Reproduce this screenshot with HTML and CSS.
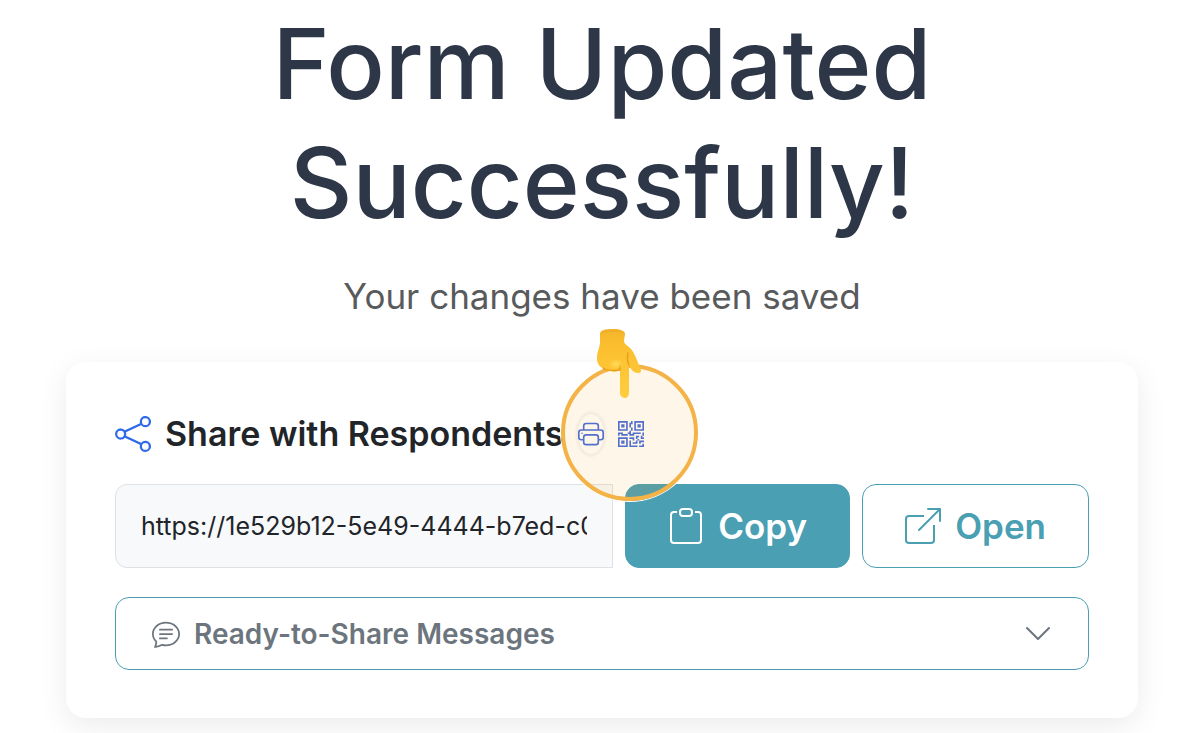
FILE: index.html
```html
<!DOCTYPE html>
<html lang="en">
<head>
    <meta charset="UTF-8">
    <meta name="viewport" content="width=device-width, initial-scale=1.0">
    <title>Form Updated</title>
    <link rel="stylesheet" href="styles.css">
</head>
<body>
    <main class="page">
        <h1>Form Updated<br>Successfully!</h1>
        <p class="subtitle">Your changes have been saved</p>

        <section class="card">
            <div class="card-header">
                <svg class="icon-share" viewBox="0 0 16 16" fill="currentColor" aria-hidden="true">
                    <path d="M13.5 1a1.5 1.5 0 1 0 0 3 1.5 1.5 0 0 0 0-3M11 2.5a2.5 2.5 0 1 1 .603 1.628l-6.718 3.12a2.5 2.5 0 0 1 0 1.504l6.718 3.12a2.5 2.5 0 1 1-.488.876l-6.718-3.12a2.5 2.5 0 1 1 0-3.256l6.718-3.12A2.5 2.5 0 0 1 11 2.5m-8.5 4a1.5 1.5 0 1 0 0 3 1.5 1.5 0 0 0 0-3m11 5.5a1.5 1.5 0 1 0 0 3 1.5 1.5 0 0 0 0-3"/>
                </svg>
                <h2>Share with Respondents</h2>
                <div class="tools">
                    <button type="button" class="tool tool-print" aria-label="Print">
                        <svg viewBox="0 0 16 16" fill="currentColor">
                            <path d="M2.5 8a.5.5 0 1 0 0-1 .5.5 0 0 0 0 1"/>
                            <path d="M5 1a2 2 0 0 0-2 2v2H2a2 2 0 0 0-2 2v3a2 2 0 0 0 2 2h1v1a2 2 0 0 0 2 2h6a2 2 0 0 0 2-2v-1h1a2 2 0 0 0 2-2V7a2 2 0 0 0-2-2h-1V3a2 2 0 0 0-2-2zM4 3a1 1 0 0 1 1-1h6a1 1 0 0 1 1 1v2H4zm1 5a2 2 0 0 0-2 2v1H2a1 1 0 0 1-1-1V7a1 1 0 0 1 1-1h12a1 1 0 0 1 1 1v3a1 1 0 0 1-1 1h-1v-1a2 2 0 0 0-2-2zm7 2v3a1 1 0 0 1-1 1H5a1 1 0 0 1-1-1v-3a1 1 0 0 1 1-1h6a1 1 0 0 1 1 1"/>
                        </svg>
                    </button>
                    <button type="button" class="tool" aria-label="QR code">
                        <svg viewBox="0 0 16 16" fill="currentColor">
                            <path d="M2 2h2v2H2z"/>
                            <path d="M6 0v6H0V0zM5 1H1v4h4zM4 12H2v2h2z"/>
                            <path d="M6 10v6H0v-6zm-5 1v4h4v-4zm11-9h2v2h-2z"/>
                            <path d="M10 0v6h6V0zm5 1v4h-4V1zM8 1V0h1v2H8v2H7V1zm0 5V4h1v2zM6 8V7h1V6h1v2h1V7h5v1h-4v1H7V8zm0 0v1H2V8H1v1H0V7h3v1zm10 1h-1V7h1zm-1 0h-1v2h2v-1h-1zm-4 0h2v1h-1v1h-1zm2 3v-1h-1v1h-1v1H9v1h3v-2zm0 0h3v1h-2v1h-1zm-4-1v1h1v-2H7v1z"/>
                            <path d="M7 12h1v3h4v1H7zm9 2v2h-3v-1h2v-1z"/>
                        </svg>
                    </button>
                    <div class="spotlight"></div>
                    <svg class="pointer" viewBox="0 0 46 70" aria-hidden="true">
                        <defs>
                            <linearGradient id="hand" x1="0" y1="0" x2="0" y2="1">
                                <stop offset="0" stop-color="#f5b52c"/>
                                <stop offset="0.3" stop-color="#fcc02f"/>
                                <stop offset="1" stop-color="#ffcd3f"/>
                            </linearGradient>
                            <radialGradient id="knuckle">
                                <stop offset="0" stop-color="#ffdc58"/>
                                <stop offset="1" stop-color="#ffdc58" stop-opacity="0"/>
                            </radialGradient>
                        </defs>
                        <path fill="url(#hand)" d="M3 5C3 1 8 0 16 0s12 2 12 5l-1 7c0 3 3 4 6 7 5 5 7 13 10 19 2 4 1 6-2 6-4 0-7-3-9-8l0 28c0 3-2 5-4 5s-5-2-5-5V41c-3 2-6 2-9 1-3 0-6 0-8-3-4-1-6-5-6-10 0-7 3-10 3-16z"/>
                        <path fill="#f0ae28" d="M3 6C4 2 10 1 16 1s11 2 12 5c-3-3-8-3-12-3S6 3 3 6z"/>
                        <path fill="none" stroke="#e5a01c" stroke-width="1.5" stroke-linecap="round" d="M31 24c-1 4-1 8 1 12M23 41v-5M6 39c4 3 10 3 16 2"/>
                        <ellipse cx="19" cy="35" rx="8" ry="5" fill="url(#knuckle)"/>
                    </svg>
                </div>
            </div>

            <div class="link-row">
                <input type="text" class="link-input" aria-label="Form link" value="https://1e529b12-5e49-4444-b7ed-c0a81f" readonly>
                <button type="button" class="btn btn-copy">
                    <svg viewBox="0 0 36 36" fill="none" stroke="currentColor" stroke-width="2" aria-hidden="true">
                        <path d="M9 4H6a3 3 0 0 0-3 3v25a3 3 0 0 0 3 3h24a3 3 0 0 0 3-3V7a3 3 0 0 0-3-3h-3"/>
                        <rect x="12" y="1" width="12" height="7" rx="3"/>
                    </svg>
                    Copy
                </button>
                <a href="#" class="btn btn-open">
                    <svg viewBox="0 0 36 36" fill="none" stroke="currentColor" stroke-width="2" aria-hidden="true">
                        <path d="M19 8H4a3 3 0 0 0-3 3v21a3 3 0 0 0 3 3h22a3 3 0 0 0 3-3V17"/>
                        <path d="M23 1h12v12M35 1 14 22" stroke-linecap="round" stroke-linejoin="round"/>
                    </svg>
                    Open
                </a>
            </div>

            <button type="button" class="messages" aria-expanded="false">
                <svg class="icon-chat" viewBox="0 0 16 16" fill="currentColor" aria-hidden="true">
                    <path d="M2.678 11.894a1 1 0 0 1 .287.801 11 11 0 0 1-.398 2c1.395-.323 2.247-.697 2.634-.893a1 1 0 0 1 .71-.074A8 8 0 0 0 8 14c3.996 0 7-2.807 7-6s-3.004-6-7-6-7 2.808-7 6c0 1.468.617 2.83 1.678 3.894m-.493 3.905a22 22 0 0 1-.713.129c-.2.032-.352-.176-.273-.362a10 10 0 0 0 .244-.637l.003-.01c.248-.72.45-1.548.524-2.319C.743 11.37 0 9.76 0 8c0-3.866 3.582-7 8-7s8 3.134 8 7-3.582 7-8 7a9 9 0 0 1-2.347-.306c-.52.263-1.639.742-3.468 1.105"/>
                    <path d="M4 5.5a.5.5 0 0 1 .5-.5h7a.5.5 0 0 1 0 1h-7a.5.5 0 0 1-.5-.5M4 8a.5.5 0 0 1 .5-.5h7a.5.5 0 0 1 0 1h-7A.5.5 0 0 1 4 8m0 2.5a.5.5 0 0 1 .5-.5h4a.5.5 0 0 1 0 1h-4a.5.5 0 0 1-.5-.5"/>
                </svg>
                <span>Ready-to-Share Messages</span>
                <svg class="icon-chevron" viewBox="0 0 24 24" fill="none" stroke="currentColor" stroke-width="2" stroke-linecap="round" stroke-linejoin="round" aria-hidden="true">
                    <path d="M1 6l11 11L23 6"/>
                </svg>
            </button>
        </section>
    </main>
</body>
</html>
```
FILE: styles.css
```css
* {
    margin: 0;
    padding: 0;
    box-sizing: border-box;
}

body {
    font-family: Inter, 'Liberation Sans', sans-serif;
    background: #fff;
    color: #212529;
}

.page {
    padding: 4px 62px 16px 66px;
}

h1 {
    font-size: 97px;
    font-weight: 500;
    line-height: 119px;
    text-align: center;
    color: #2d3748;
}

.subtitle {
    margin-top: 32px;
    font-size: 35px;
    line-height: 44px;
    text-align: center;
    color: #585a5c;
}

.card {
    margin-top: 44px;
    padding: 48px 49px;
    border-radius: 20px;
    background: #fff;
    box-shadow: 0 8px 30px rgba(0, 0, 0, 0.08);
}

.card-header {
    display: flex;
    align-items: center;
    height: 48px;
    margin-bottom: 26px;
}

.card-header h2 {
    margin-left: 14px;
    font-size: 34px;
    font-weight: 600;
    line-height: 48px;
    white-space: nowrap;
}

.icon-share {
    flex: none;
    width: 36px;
    height: 36px;
    color: #2f6be8;
}

.tools {
    position: relative;
    display: flex;
    align-items: center;
    gap: 14px;
    margin-left: 14px;
}

.tool {
    display: flex;
    align-items: center;
    justify-content: center;
    width: 26px;
    height: 40px;
    border: none;
    background: none;
    color: #4169e1;
    cursor: pointer;
}

.tool svg {
    flex: none;
    width: 26px;
    height: 26px;
}

.tool-print {
    border-radius: 50%;
    box-shadow: 0 0 3px 2px #eef1ef;
}

/* highlight ring around the print and QR buttons */
.spotlight {
    position: absolute;
    top: -50px;
    left: -17px;
    width: 137px;
    height: 137px;
    border: 4px solid #f3b347;
    border-radius: 50%;
    background: rgba(247, 170, 40, 0.1);
    box-shadow: 0 0 0 1px #fff;
    pointer-events: none;
}

.pointer {
    position: absolute;
    top: -85px;
    left: 19px;
    width: 46px;
    height: 70px;
    pointer-events: none;
}

.link-row {
    display: flex;
    gap: 12px;
}

.link-input {
    flex: 1;
    min-width: 0;
    height: 84px;
    padding: 0 25px;
    border: 1px solid #dee2e6;
    border-radius: 12px 0 0 12px;
    background: #f8f9fb;
    font-family: inherit;
    font-size: 25px;
    color: #212529;
}

.btn {
    display: flex;
    align-items: center;
    justify-content: center;
    gap: 14px;
    height: 84px;
    padding: 0 42px;
    border: 1px solid #4a9fb3;
    border-radius: 14px;
    font-family: inherit;
    font-size: 35px;
    font-weight: 600;
    text-decoration: none;
    cursor: pointer;
}

.btn svg {
    flex: none;
    width: 36px;
    height: 36px;
}

.btn-copy {
    background: #4a9fb3;
    color: #fff;
}

.btn-open {
    background: #fff;
    color: #4a9fb3;
}

.messages {
    display: flex;
    align-items: center;
    width: 100%;
    height: 73px;
    margin-top: 29px;
    padding: 0 38px 0 36px;
    border: 1px solid #4a9fb3;
    border-radius: 14px;
    background: #fff;
    font-family: inherit;
    font-size: 28px;
    font-weight: 600;
    color: #6c757d;
    cursor: pointer;
}

.messages span {
    flex: 1;
    margin-left: 14px;
    text-align: left;
}

.icon-chat {
    width: 28px;
    height: 28px;
}

.icon-chevron {
    width: 24px;
    height: 24px;
}
```
